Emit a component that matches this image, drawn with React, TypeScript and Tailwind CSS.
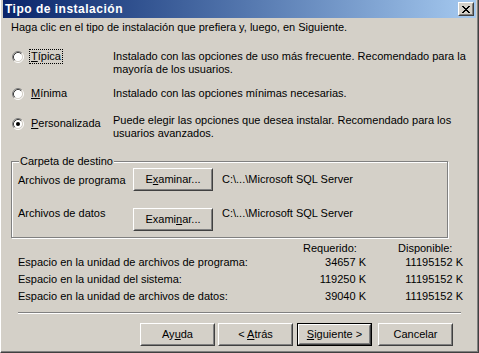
import React from "react";
import clsx from "clsx";

function Radio({ checked }: { checked?: boolean }) {
  return (
    <svg width="12" height="12" viewBox="0 0 12 12" className="shrink-0">
      <circle cx="6" cy="6" r="4.5" fill="#ffffff" />
      <path d="M2.11 9.89 A5.5 5.5 0 0 1 9.89 2.11" stroke="#808080" fill="none" />
      <path d="M9.89 2.11 A5.5 5.5 0 0 1 2.11 9.89" stroke="#ffffff" fill="none" />
      <path d="M2.82 9.18 A4.5 4.5 0 0 1 9.18 2.82" stroke="#404040" fill="none" />
      <path d="M9.18 2.82 A4.5 4.5 0 0 1 2.82 9.18" stroke="#d4d0c8" fill="none" />
      {checked && <circle cx="6" cy="6" r="2" fill="#000000" />}
    </svg>
  );
}

function Btn({
  children,
  isDefault,
  className,
}: {
  children: React.ReactNode;
  isDefault?: boolean;
  className?: string;
}) {
  return (
    <div className={clsx("h-[23px] w-[75px] shrink-0", isDefault && "border border-black", className)}>
      <div className="h-full w-full border border-t-white border-l-white border-r-[#404040] border-b-[#404040]">
        <div className="flex h-full w-full items-center justify-center border border-t-[#d4d0c8] border-l-[#d4d0c8] border-r-[#808080] border-b-[#808080]">
          {children}
        </div>
      </div>
    </div>
  );
}

const OPTIONS = [
  {
    key: "T",
    rest: "ípica",
    desc: ["Instalado con las opciones de uso más frecuente. Recomendado para la", "mayoría de los usuarios."],
    focus: true,
  },
  { key: "M", rest: "ínima", desc: ["Instalado con las opciones mínimas necesarias."] },
  {
    key: "P",
    rest: "ersonalizada",
    desc: ["Puede elegir las opciones que desea instalar. Recomendado para los", "usuarios avanzados."],
    checked: true,
  },
];

const SPACE = [
  ["Espacio en la unidad de archivos de programa:", "34657 K", "11195152 K"],
  ["Espacio en la unidad del sistema:", "119250 K", "11195152 K"],
  ["Espacio en la unidad de archivos de datos:", "39040 K", "11195152 K"],
];

export default function App() {
  return (
    <div className="h-[353px] w-[479px] overflow-hidden bg-[#d4d0c8] font-['Liberation_Sans',Arial,sans-serif] text-[11px] leading-[13px] text-black">
      <div className="h-full border-l border-r border-b border-l-white border-r-[#404040] border-b-[#404040]">
        <div className="h-full border-r border-b border-r-[#808080] border-b-[#808080] pl-[2px] pr-[1px]">
          {/* title bar */}
          <div className="flex h-[18px] items-center justify-between bg-linear-to-r from-[#0a246a] to-[#a6caf0] pl-[2px] pr-[2px]">
            <span className="text-[12px] font-bold tracking-[0.5px] text-white">Tipo de instalación</span>
            <div className="h-[14px] w-[16px] border border-t-white border-l-white border-r-[#404040] border-b-[#404040] bg-[#d4d0c8]">
              <div className="flex h-full w-full items-center justify-center border border-t-[#d4d0c8] border-l-[#d4d0c8] border-r-[#808080] border-b-[#808080]">
                <svg width="8" height="7" viewBox="0 0 8 7" shapeRendering="crispEdges">
                  <path
                    d="M0 0h2v1H0zM6 0h2v1H6zM1 1h2v1H1zM5 1h2v1H5zM2 2h4v1H2zM3 3h2v1H3zM2 4h4v1H2zM1 5h2v1H1zM5 5h2v1H5zM0 6h2v1H0zM6 6h2v1H6z"
                    fill="#000"
                  />
                </svg>
              </div>
            </div>
          </div>

          {/* intro */}
          <div className="mt-[3px] pl-[8px]">Haga clic en el tipo de instalación que prefiera y, luego, en Siguiente.</div>

          {/* options */}
          <div className="mt-[16px] flex flex-col pl-[9px]">
            {OPTIONS.map((o, i) => (
              <div key={o.key} className={clsx("flex", i === 1 && "mt-[11px]", i === 2 && "mt-[14px]")}>
                <div className={clsx("flex w-[101px] shrink-0 items-center gap-[5px]", i === 2 ? "h-[17px] pt-[2px]" : "h-[13px]")}>
                  <Radio checked={o.checked} />
                  <span
                    className={clsx(
                      "border px-[1px]",
                      o.focus ? "border-dotted border-black" : "border-transparent",
                    )}
                  >
                    <span className="underline underline-offset-1">{o.key}</span>
                    {o.rest}
                  </span>
                </div>
                <div className="flex flex-col">
                  {o.desc.map((d) => (
                    <div key={d}>{d}</div>
                  ))}
                </div>
              </div>
            ))}
          </div>

          {/* group box */}
          <div className="relative ml-[8px] mt-[21px] w-[437px] border border-[#808080] px-[6px] pt-[6px] pb-[6px] shadow-[inset_1px_1px_0_#ffffff,1px_1px_0_#ffffff]">
            <div className="absolute left-[7px] top-[-7px] bg-[#d4d0c8] px-[1px]">Carpeta de destino</div>
            <div className="flex items-start">
              <div className="w-[115px] shrink-0 pt-[6px]">Archivos de programa</div>
              <Btn className="w-[80px]">
                <span>
                  E<span className="underline underline-offset-1">x</span>aminar...
                </span>
              </Btn>
              <div className="ml-[9px] pt-[5px]">C:\...\Microsoft SQL Server</div>
            </div>
            <div className="mt-[16px] flex items-start">
              <div className="w-[115px] shrink-0">Archivos de datos</div>
              <Btn className="mt-[1px] w-[80px]">
                <span>
                  Exami<span className="underline underline-offset-1">n</span>ar...
                </span>
              </Btn>
              <div className="ml-[9px]">C:\...\Microsoft SQL Server</div>
            </div>
          </div>

          {/* space */}
          <div className="mt-[4px] pl-[15px]">
            <div className="flex h-[14px]">
              <div className="w-[285px] shrink-0" />
              <div className="w-[63px] shrink-0">Requerido:</div>
              <div className="ml-[32px] w-[65px] shrink-0">Disponible:</div>
            </div>
            {SPACE.map((r) => (
              <div key={r[0]} className="flex h-[17px]">
                <div className="w-[285px] shrink-0">{r[0]}</div>
                <div className="w-[63px] shrink-0 text-right">{r[1]}</div>
                <div className="ml-[32px] w-[65px] shrink-0 text-right">{r[2]}</div>
              </div>
            ))}
          </div>

          {/* separator */}
          <div className="ml-[15px] mt-[5px] w-[443px] border-t border-b border-t-[#808080] border-b-white" />

          {/* buttons */}
          <div className="mt-[9px] flex pl-[137px]">
            <Btn>
              <span>
                Ay<span className="underline underline-offset-1">u</span>da
              </span>
            </Btn>
            <Btn className="ml-[3px]">
              <span>
                &lt; <span className="underline underline-offset-1">A</span>trás
              </span>
            </Btn>
            <Btn isDefault className="ml-[4px]">
              <span>
                <span className="underline underline-offset-1">S</span>iguiente &gt;
              </span>
            </Btn>
            <Btn className="ml-[6px]">Cancelar</Btn>
          </div>
        </div>
      </div>
    </div>
  );
}
